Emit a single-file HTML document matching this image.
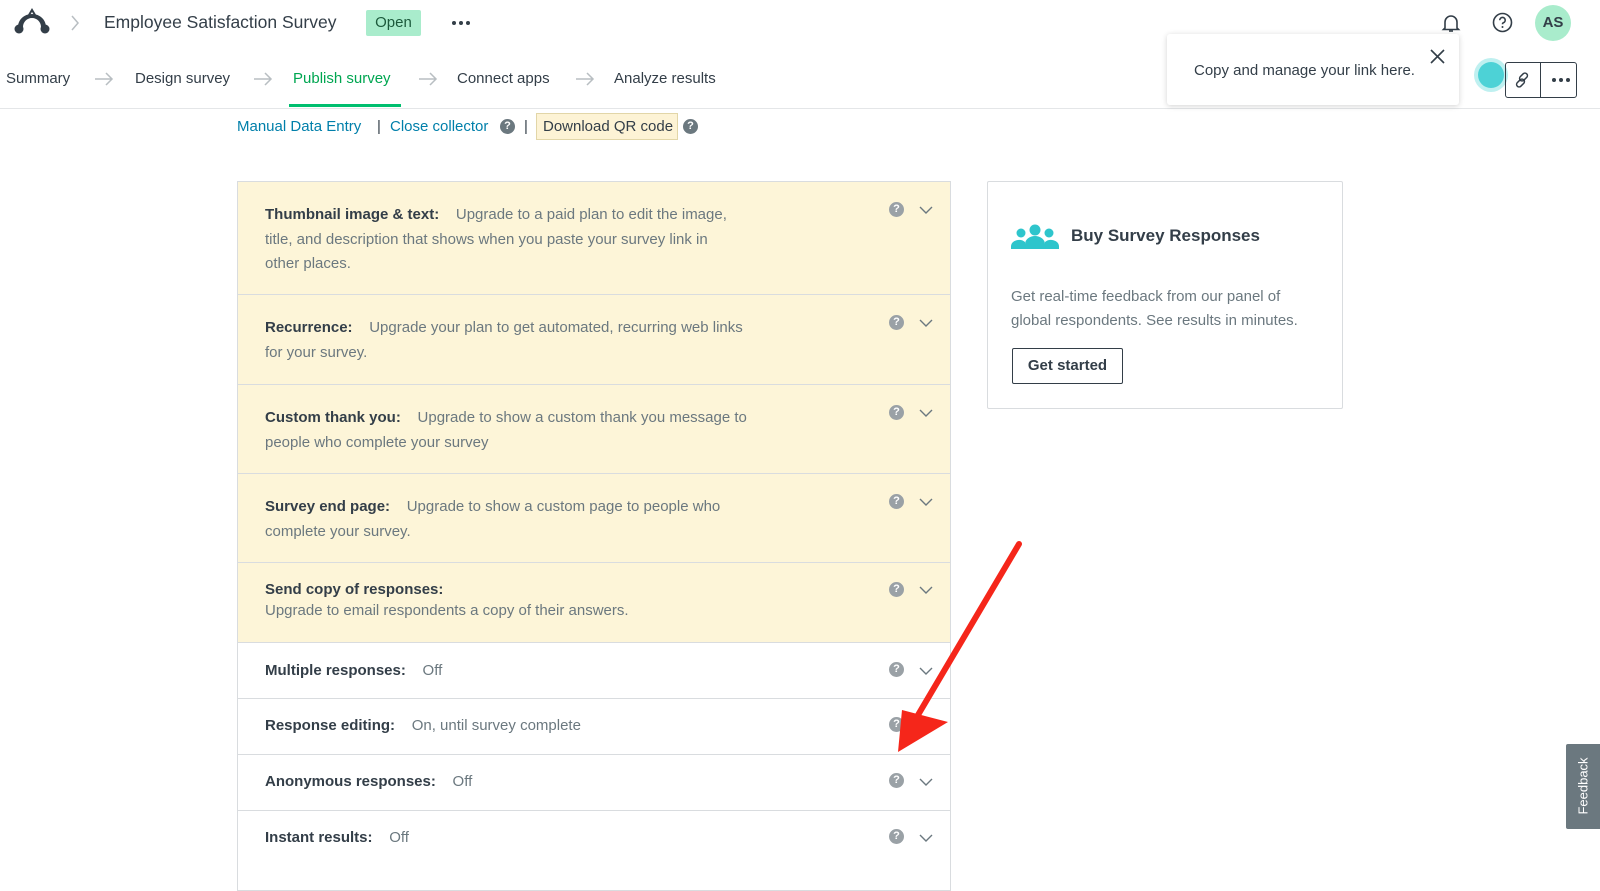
<!DOCTYPE html>
<html><head><meta charset="utf-8"><style>
*{box-sizing:border-box;margin:0;padding:0}
body{width:1600px;height:857px;overflow:hidden;background:#fff;font-family:"Liberation Sans",sans-serif;color:#333e48;position:relative}
.a{position:absolute;white-space:nowrap}
.nav{font-size:15px;top:70px}
.lnk{color:#007faa;font-size:15px;top:118px}
.panel{position:absolute;left:237px;top:181px;width:714px;border:1px solid #d9dcdf;border-bottom:none}
.row{position:relative;border-bottom:1px solid #d9dcdf;padding:0 0 0 27px;font-size:15px;line-height:24.5px}
.y{background:#fdf5d8}
.row b{color:#333e48}
.row span{color:#6b787f}
.q{position:absolute;right:46px;width:15px;height:15px;border-radius:50%;background:#9aa1a6;color:#fff;font-size:11px;font-weight:bold;text-align:center;line-height:15px}
.cv{position:absolute;right:17px;width:14px;height:9px}
.dots{position:absolute;display:flex;gap:3px}
.dots i{width:4px;height:4px;border-radius:50%;background:#333e48;display:block}
</style></head><body>
<!-- header -->
<svg class="a" style="left:13px;top:8px" width="38" height="28" viewBox="0 0 38 28"><path d="M19 6c-8 0-14 6-14 13v3h5v-3c0-5 4-9 9-9s9 4 9 9v3h5v-3c0-7-6-13-14-13z" fill="#333e48"/><circle cx="6" cy="21" r="4.5" fill="#333e48"/><circle cx="32" cy="21" r="4.5" fill="#333e48"/><path d="M16 7l3-5 3 5" stroke="#333e48" stroke-width="2" fill="none"/></svg>
<svg class="a" style="left:70px;top:15px" width="10" height="16"><path d="M2 1l6 7-6 7" stroke="#b8bec2" stroke-width="1.5" fill="none"/></svg>
<div class="a" style="left:104px;top:12px;font-size:17.5px;color:#333e48">Employee Satisfaction Survey</div>
<div class="a" style="left:366px;top:10px;width:55px;height:26px;background:#a9eccc;border-radius:2px;font-size:15px;text-align:center;line-height:26px;color:#1c5a3c">Open</div>
<div class="dots" style="left:452px;top:21px"><i></i><i></i><i></i></div>
<svg class="a" style="left:1441px;top:13px" width="20" height="20" viewBox="0 0 20 20"><path d="M4 15V9a6 6 0 0 1 12 0v6l1.5 1.5h-15z" stroke="#333e48" stroke-width="1.6" fill="none"/><path d="M8 18h4" stroke="#333e48" stroke-width="1.6"/></svg>
<svg class="a" style="left:1492px;top:12px" width="21" height="21" viewBox="0 0 21 21"><circle cx="10.5" cy="10.5" r="9" stroke="#333e48" stroke-width="1.6" fill="none"/><path d="M7.8 8.2a2.7 2.7 0 1 1 3.6 2.5c-.7.3-.9.8-.9 1.6" stroke="#333e48" stroke-width="1.6" fill="none"/><circle cx="10.5" cy="15" r="1" fill="#333e48"/></svg>
<div class="a" style="left:1535px;top:5px;width:36px;height:36px;border-radius:50%;background:#a9eccc;font-size:15px;font-weight:bold;text-align:center;line-height:36px;color:#333e48">AS</div>
<!-- nav -->
<div class="a nav" style="left:6px">Summary</div>
<div class="a nav" style="left:293px;color:#00a651">Publish survey</div>
<div class="a nav" style="left:135px">Design survey</div>
<div class="a nav" style="left:457px">Connect apps</div>
<div class="a nav" style="left:614px">Analyze results</div>
<svg class="a" style="left:95px;top:72px" width="540" height="14"><g stroke="#b8bec2" stroke-width="1.5" fill="none"><path d="M0 7h17M11 1l6 6-6 6"/><path d="M159 7h17M170 1l6 6-6 6"/><path d="M324 7h17M335 1l6 6-6 6"/><path d="M481 7h17M492 1l6 6-6 6"/></g></svg>
<div class="a" style="left:289px;top:104px;width:112px;height:3px;background:#00bf6f"></div>
<div class="a" style="left:0;top:108px;width:1600px;height:1px;background:#e4e6e8"></div>
<!-- tooltip -->
<div class="a" style="left:1167px;top:34px;width:292px;height:71px;background:#fff;border-radius:3px;box-shadow:0 1px 6px rgba(0,0,0,.18)"></div>
<div class="a" style="left:1194px;top:62px;font-size:15px;color:#333e48">Copy and manage your link here.</div>
<svg class="a" style="left:1430px;top:49px" width="15" height="15"><path d="M1 1l13 13M14 1L1 14" stroke="#333e48" stroke-width="1.6"/></svg>
<div class="a" style="left:1474px;top:58px;width:34px;height:34px;border-radius:50%;background:#bff0f0"></div>
<div class="a" style="left:1478px;top:62px;width:26px;height:26px;border-radius:50%;background:#4dd2d6"></div>
<div class="a" style="left:1505px;top:62px;width:72px;height:36px;border:1px solid #333e48;border-radius:3px"></div>
<div class="a" style="left:1540px;top:62px;width:1px;height:36px;background:#333e48"></div>
<svg class="a" style="left:1514px;top:71px" width="18" height="18" viewBox="0 0 18 18"><g stroke="#333e48" stroke-width="1.5" fill="none"><rect x="7" y="1.5" width="5" height="9" rx="2.5" transform="rotate(45 9.5 6)"/><rect x="4" y="7.5" width="5" height="9" rx="2.5" transform="rotate(45 6.5 12)"/></g></svg>
<div class="dots" style="left:1552px;top:78px"><i></i><i></i><i></i></div>
<!-- links -->
<div class="a lnk" style="left:237px">Manual Data Entry</div>
<div class="a" style="left:377px;top:118px;font-size:15px">|</div>
<div class="a lnk" style="left:390px">Close collector</div>
<div class="a" style="left:500px;top:119px;width:15px;height:15px;border-radius:50%;background:#6b787f;color:#fff;font-size:11px;font-weight:bold;text-align:center;line-height:15px">?</div>
<div class="a" style="left:524px;top:118px;font-size:15px">|</div>
<div class="a" style="left:536px;top:113px;width:142px;height:27px;background:#fdf3d5;border:1px solid #e2d6a8;font-size:15px;line-height:25px;padding-left:6px">Download QR code</div>
<div class="a" style="left:683px;top:119px;width:15px;height:15px;border-radius:50%;background:#6b787f;color:#fff;font-size:11px;font-weight:bold;text-align:center;line-height:15px">?</div>
<!-- panel -->
<div class="panel">
<div class="row y" style="height:113px;padding-top:21px"><b>Thumbnail image &amp; text:</b>&nbsp;&nbsp;&nbsp;&nbsp;<span>Upgrade to a paid plan to edit the image,<br>title, and description that shows when you paste your survey link in<br>other places.</span><div class="q" style="top:20px">?</div><svg class="cv" style="top:24px"><path d="M1 1l6 6 6-6" stroke="#6b787f" stroke-width="1.4" fill="none"/></svg></div>
<div class="row y" style="height:90px;padding-top:21px"><b>Recurrence:</b>&nbsp;&nbsp;&nbsp;&nbsp;<span>Upgrade your plan to get automated, recurring web links<br>for your survey.</span><div class="q" style="top:20px">?</div><svg class="cv" style="top:24px"><path d="M1 1l6 6 6-6" stroke="#6b787f" stroke-width="1.4" fill="none"/></svg></div>
<div class="row y" style="height:89px;padding-top:21px"><b>Custom thank you:</b>&nbsp;&nbsp;&nbsp;&nbsp;<span>Upgrade to show a custom thank you message to<br>people who complete your survey</span><div class="q" style="top:20px">?</div><svg class="cv" style="top:24px"><path d="M1 1l6 6 6-6" stroke="#6b787f" stroke-width="1.4" fill="none"/></svg></div>
<div class="row y" style="height:89px;padding-top:21px"><b>Survey end page:</b>&nbsp;&nbsp;&nbsp;&nbsp;<span>Upgrade to show a custom page to people who<br>complete your survey.</span><div class="q" style="top:20px">?</div><svg class="cv" style="top:24px"><path d="M1 1l6 6 6-6" stroke="#6b787f" stroke-width="1.4" fill="none"/></svg></div>
<div class="row y" style="height:80px;padding-top:16px;line-height:21px"><b>Send copy of responses:</b><br><span>Upgrade to email respondents a copy of their answers.</span><div class="q" style="top:19px">?</div><svg class="cv" style="top:23px"><path d="M1 1l6 6 6-6" stroke="#6b787f" stroke-width="1.4" fill="none"/></svg></div>
<div class="row" style="height:56px;padding-top:16px"><b>Multiple responses:</b>&nbsp;&nbsp;&nbsp;&nbsp;<span>Off</span><div class="q" style="top:19px">?</div><svg class="cv" style="top:24px"><path d="M1 1l6 6 6-6" stroke="#6b787f" stroke-width="1.4" fill="none"/></svg></div>
<div class="row" style="height:56px;padding-top:15px"><b>Response editing:</b>&nbsp;&nbsp;&nbsp;&nbsp;<span>On, until survey complete</span><div class="q" style="top:18px">?</div></div>
<div class="row" style="height:56px;padding-top:15px"><b>Anonymous responses:</b>&nbsp;&nbsp;&nbsp;&nbsp;<span>Off</span><div class="q" style="top:18px">?</div><svg class="cv" style="top:23px"><path d="M1 1l6 6 6-6" stroke="#6b787f" stroke-width="1.4" fill="none"/></svg></div>
<div class="row" style="height:80px;padding-top:15px"><b>Instant results:</b>&nbsp;&nbsp;&nbsp;&nbsp;<span>Off</span><div class="q" style="top:18px">?</div><svg class="cv" style="top:23px"><path d="M1 1l6 6 6-6" stroke="#6b787f" stroke-width="1.4" fill="none"/></svg></div>
</div>
<!-- card -->
<div class="a" style="left:987px;top:181px;width:356px;height:228px;border:1px solid #d9dcdf;border-radius:2px"></div>
<svg class="a" style="left:1011px;top:224px" width="48" height="25" viewBox="0 0 48 25"><g fill="#2ec5cc"><circle cx="24" cy="6" r="5.5"/><circle cx="10" cy="9" r="4.5"/><circle cx="38" cy="9" r="4.5"/><path d="M14 25v-5a10 8 0 0 1 20 0v5z"/><path d="M0 25v-3a8 6 0 0 1 14-4v7z"/><path d="M48 25v-3a8 6 0 0 0-14-4v7z"/></g></svg>
<div class="a" style="left:1071px;top:226px;font-size:17px;font-weight:bold;color:#333e48">Buy Survey Responses</div>
<div class="a" style="left:1011px;top:285px;font-size:15px;line-height:24px;color:#6b787f">Get real-time feedback from our panel of<br>global respondents. See results in minutes.</div>
<div class="a" style="left:1012px;top:348px;width:111px;height:36px;border:1px solid #333e48;border-radius:2px;font-size:15px;font-weight:bold;text-align:center;line-height:34px">Get started</div>
<!-- arrow -->
<svg class="a" style="left:0;top:0" width="1600" height="857"><path d="M1019 544L918 715" stroke="#f5261a" stroke-width="6" stroke-linecap="round"/><path d="M898 752L902 710L948 722z" fill="#f5261a"/></svg>
<!-- feedback -->
<div class="a" style="left:1566px;top:744px;width:34px;height:85px;background:#6b787f;border-radius:2px 0 0 2px"></div>
<div class="a" style="left:1583px;top:786px;transform:translate(-50%,-50%) rotate(-90deg);color:#fff;font-size:13px">Feedback</div>
</body></html>
